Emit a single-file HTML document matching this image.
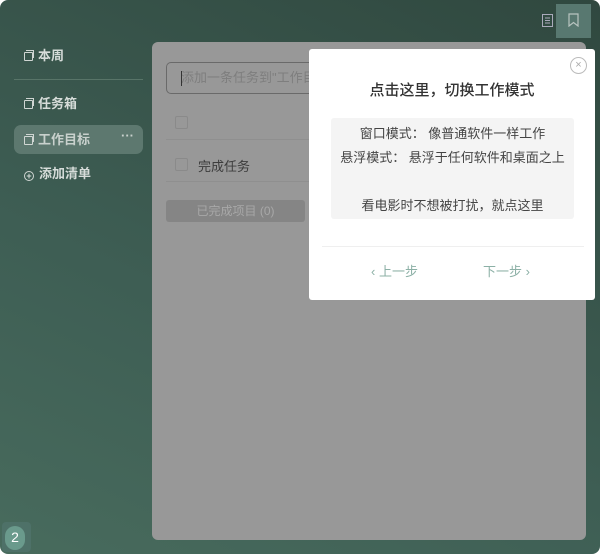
<!DOCTYPE html>
<html><head><meta charset="utf-8"><style>
*{margin:0;padding:0;box-sizing:border-box}
body{width:600px;height:554px;background:#fff;overflow:hidden;font-family:"Liberation Sans","Noto Sans CJK SC",sans-serif;position:relative}
.win{position:absolute;left:0;top:0;width:600px;height:554px;border-radius:8px;background:linear-gradient(25deg,#486b5d 0%,#3e5e54 40%,#30483f 100%)}
.side{position:absolute;color:#d6dcd9;font-size:13px;font-weight:bold}
.ico{display:inline-block;width:9px;height:9px;border:1px solid #d0d6d3;border-radius:1px;margin-right:5px;vertical-align:-1px;position:relative}
.ico:after{content:"";position:absolute;left:1px;top:-3px;width:7px;height:7px;border-top:1px solid #d0d6d3;border-right:1px solid #d0d6d3}
.panel{position:absolute;left:152px;top:42px;width:434px;height:498px;background:#989898;border-radius:6px}
.inp{position:absolute;left:14px;top:20px;width:160px;height:32px;border:1px solid #6a6a6a;border-right:none;border-radius:5px 0 0 5px;color:#7e7e7e;font-size:13px;line-height:30px;padding-left:14px;white-space:nowrap;overflow:hidden}
.inp:before{content:"";position:absolute;left:14px;top:8px;width:1px;height:15px;background:#333}
.cb{position:absolute;width:13px;height:13px;border:1px solid #8a8a8a;border-radius:2px}
.line{position:absolute;left:14px;width:420px;height:1px;background:#8f8f8f}
.done{position:absolute;left:14px;top:158px;width:139px;height:22px;background:#858585;border-radius:3px;color:#a8a8a8;font-size:12px;text-align:center;line-height:22px}
.modal{position:absolute;left:309px;top:49px;width:286px;height:251px;background:#fff;border-radius:3px}
.box{position:absolute;left:22px;top:69px;width:243px;height:101px;background:#f4f4f4;border-radius:3px;color:#444;font-size:13px;text-align:center;line-height:24px;padding-top:4px}
</style></head><body>
<div class="win">
<div class="side" style="left:24px;top:45px"><span class="ico"></span>本周</div>
<div style="position:absolute;left:14px;top:79px;width:129px;height:1px;background:#587468"></div>
<div class="side" style="left:24px;top:93px"><span class="ico"></span>任务箱</div>
<div style="position:absolute;left:14px;top:125px;width:129px;height:29px;background:#5d786f;border-radius:7px"></div>
<div class="side" style="left:24px;top:129px;color:#c9d1cd"><span class="ico"></span>工作目标</div>
<div class="side" style="left:121px;top:128px;color:#c9d1cd">···</div>
<div class="side" style="left:24px;top:163px"><span style="display:inline-block;width:10px;height:10px;border:1px solid #d0d6d3;border-radius:50%;margin-right:5px;vertical-align:-1px;text-align:center;font-size:9px;line-height:8px">+</span>添加清单</div>
<div style="position:absolute;left:556px;top:4px;width:35px;height:34px;background:#587870"></div>
<svg style="position:absolute;left:542px;top:14px" width="12" height="13"><rect x="0.5" y="0.5" width="10" height="12" fill="none" stroke="#aab" stroke-width="1"/><path d="M3 4h5M3 6.5h5M3 9h5" stroke="#aab"/></svg>
<svg style="position:absolute;left:568px;top:13px" width="12" height="14"><path d="M1 1h9v12l-4.5-3.5L1 13z" fill="none" stroke="#b8c4c0" stroke-width="1.2"/></svg>
<div class="panel">
<div class="inp">添加一条任务到"工作目标"</div>
<div class="cb" style="left:23px;top:74px"></div>
<div class="line" style="top:97px"></div>
<div class="cb" style="left:23px;top:116px"></div>
<div style="position:absolute;left:46px;top:114px;font-size:13px;color:#3c3c3c">完成任务</div>
<div class="line" style="top:139px"></div>
<div class="done">已完成项目 (0)</div>
</div>
<div style="position:absolute;left:2px;top:522px;width:29px;height:30px;background:#4e7168;border-radius:4px"></div>
<div style="position:absolute;left:5px;top:526px;width:20px;height:24px;background:#6a9a8c;border-radius:10px;color:#fff;font-size:14px;text-align:center;line-height:22px">2</div>
</div>
<div class="modal">
<div style="position:absolute;left:261px;top:8px;width:17px;height:17px;border:1px solid #bbb;border-radius:50%;color:#aaa;font-size:11px;text-align:center;line-height:15px">×</div>
<div style="position:absolute;left:0;top:30px;width:100%;text-align:center;font-size:15px;color:#333;font-weight:500">点击这里，切换工作模式</div>
<div class="box">窗口模式：&nbsp;像普通软件一样工作<br>悬浮模式：&nbsp;悬浮于任何软件和桌面之上<br><br>看电影时不想被打扰，就点这里</div>
<div style="position:absolute;left:13px;top:197px;width:262px;height:1px;background:#efefef"></div>
<div style="position:absolute;left:62px;top:212px;font-size:13px;color:#8cb0a6">‹ 上一步</div>
<div style="position:absolute;left:174px;top:212px;font-size:13px;color:#8cb0a6">下一步 ›</div>
</div>
</body></html>
